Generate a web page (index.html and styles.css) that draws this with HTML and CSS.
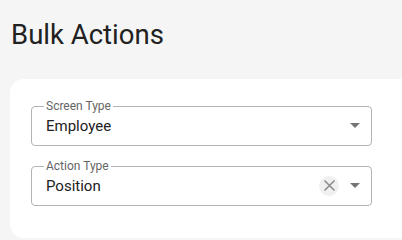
FILE: index.html
```html
<!DOCTYPE html>
<html>
<head>
<meta charset="utf-8">
<link rel="stylesheet" href="styles.css">
</head>
<body>
<h1 class="title">Bulk Actions</h1>
<div class="card">
  <fieldset class="field">
    <legend class="label">Screen Type</legend>
    <div class="row">
      <span class="value">Employee</span>
      <span class="arrow"></span>
    </div>
  </fieldset>
  <fieldset class="field">
    <legend class="label">Action Type</legend>
    <div class="row">
      <span class="value">Position</span>
      <span class="clear">
        <svg width="13" height="13" viewBox="0 0 13 13"><path d="M1.5 1.5 L11.5 11.5 M11.5 1.5 L1.5 11.5" stroke="#8a8a8a" stroke-width="1.5" fill="none"/></svg>
      </span>
      <span class="arrow"></span>
    </div>
  </fieldset>
</div>
</body>
</html>
```

FILE: styles.css
```css
html, body {
  margin: 0;
  padding: 0;
  background: #f5f5f5;
  font-family: Roboto, "Noto Sans", sans-serif;
  color: #212121;
}
.title {
  margin: 0;
  padding: 18px 0 0 11px;
  height: 79px;
  box-sizing: border-box;
  font-size: 27.5px;
  font-weight: 400;
  line-height: 34px;
}
.card {
  background: #fff;
  margin-left: 10px;
  height: 159px;
  box-sizing: border-box;
  border-radius: 14px 0 0 14px;
  padding: 20px 30px 0 21px;
  display: flex;
  flex-direction: column;
  gap: 13px;
}
.field {
  margin: 0;
  padding: 0 8px 0 12px;
  border: 1px solid #b3b3b3;
  border-radius: 4px;
  min-width: 0;
}
.label {
  padding: 0 2px;
  font-size: 12px;
  line-height: 14px;
  color: #666;
}
.row {
  display: flex;
  align-items: center;
  height: 32px;
  padding: 0 0 0 2px;
  box-sizing: border-box;
}
.value {
  flex: 1;
  font-size: 15px;
  line-height: 18px;
  padding-bottom: 7px;
}
.arrow {
  width: 0;
  height: 0;
  border-left: 5px solid transparent;
  border-right: 5px solid transparent;
  border-top: 5px solid #757575;
  margin: 0 3px 7px 0;
}
.clear {
  width: 20px;
  height: 20px;
  border-radius: 50%;
  background: #f0f0f0;
  display: flex;
  align-items: center;
  justify-content: center;
  margin: 0 11px 7px 0;
}
```
